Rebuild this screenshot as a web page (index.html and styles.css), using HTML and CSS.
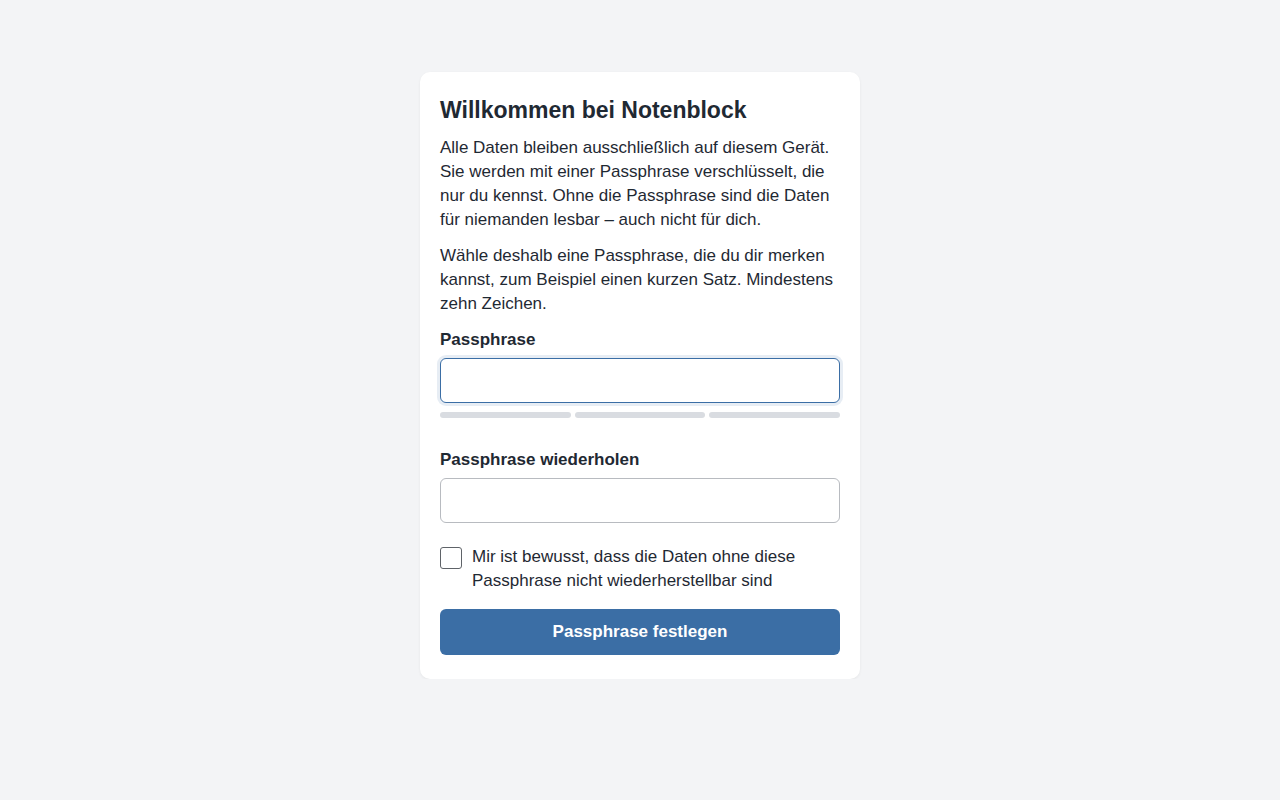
FILE: index.html
```html
<!DOCTYPE html>
<html lang="de">
<head>
    <meta charset="UTF-8">
    <meta name="viewport" content="width=device-width, initial-scale=1.0">
    <title>Notenblock</title>
    <link rel="stylesheet" href="styles.css">
</head>
<body>

    <div class="page">
        <!-- Setup card -->
        <form class="card" id="setupForm">
            <h1 class="card-title">Willkommen bei Notenblock</h1>
            <p class="card-text">Alle Daten bleiben ausschließlich auf diesem Gerät. Sie werden mit einer Passphrase verschlüsselt, die nur du kennst. Ohne die Passphrase sind die Daten für niemanden lesbar – auch nicht für dich.</p>
            <p class="card-text">Wähle deshalb eine Passphrase, die du dir merken kannst, zum Beispiel einen kurzen Satz. Mindestens zehn Zeichen.</p>

            <label class="field-label" for="pass1">Passphrase</label>
            <input class="field-input is-active" type="password" id="pass1" autofocus>
            <div class="strength">
                <span class="strength-bar"></span>
                <span class="strength-bar"></span>
                <span class="strength-bar"></span>
            </div>

            <label class="field-label field-label-second" for="pass2">Passphrase wiederholen</label>
            <input class="field-input" type="password" id="pass2">

            <label class="confirm">
                <input class="confirm-box" type="checkbox">
                <span>Mir ist bewusst, dass die Daten ohne diese Passphrase nicht wiederherstellbar sind</span>
            </label>

            <button class="submit-btn" type="submit">Passphrase festlegen</button>
        </form>
    </div>

</body>
</html>
```

FILE: styles.css
```css
body {
    font-family: "Liberation Sans", Arial, sans-serif;
    background-color: #f3f4f6;
    color: #1f2933;
    margin: 0;
    padding: 0;
}
.page {
    display: flex;
    justify-content: center;
    padding-top: 72px;
}
.card {
    width: 440px;
    box-sizing: border-box;
    background: white;
    padding: 24px 20px;
    border-radius: 10px;
    box-shadow: 0 1px 3px rgba(0, 0, 0, 0.06);
    display: flex;
    flex-direction: column;
}
.card-title {
    font-size: 23px;
    line-height: 29px;
    margin: 0 0 11px;
}
.card-text {
    font-size: 17px;
    line-height: 24px;
    margin: 0 0 12px;
}
.field-label {
    font-size: 17px;
    line-height: 24px;
    font-weight: bold;
    margin-bottom: 6px;
}
.field-label-second {
    margin-top: 30px;
}
.field-input {
    height: 45px;
    box-sizing: border-box;
    width: 100%;
    padding: 10px 12px;
    font-size: 17px;
    font-family: inherit;
    border: 1px solid #b8bbc0;
    border-radius: 6px;
    outline: none;
    margin: 0;
}
.field-input:focus, .field-input.is-active {
    border-color: #3b6ea5;
    box-shadow: 0 0 0 3px rgba(59, 110, 165, 0.12);
}
.strength {
    display: flex;
    gap: 4px;
    margin-top: 9px;
}
.strength-bar {
    flex: 1;
    height: 6px;
    border-radius: 3px;
    background-color: #d9dce1;
}
.confirm {
    display: flex;
    gap: 10px;
    align-items: flex-start;
    margin-top: 22px;
    font-size: 17px;
    line-height: 24px;
}
.confirm-box {
    appearance: none;
    -webkit-appearance: none;
    flex-shrink: 0;
    width: 22px;
    height: 22px;
    margin: 2px 0 0;
    border: 1px solid #5f6368;
    border-radius: 3px;
    background: white;
}
.submit-btn {
    margin-top: 16px;
    height: 46px;
    width: 100%;
    border: none;
    border-radius: 6px;
    background-color: #3b6ea5;
    color: white;
    font-family: inherit;
    font-size: 17px;
    font-weight: bold;
    cursor: pointer;
}
.submit-btn:hover {
    background-color: #345f90;
}
```
